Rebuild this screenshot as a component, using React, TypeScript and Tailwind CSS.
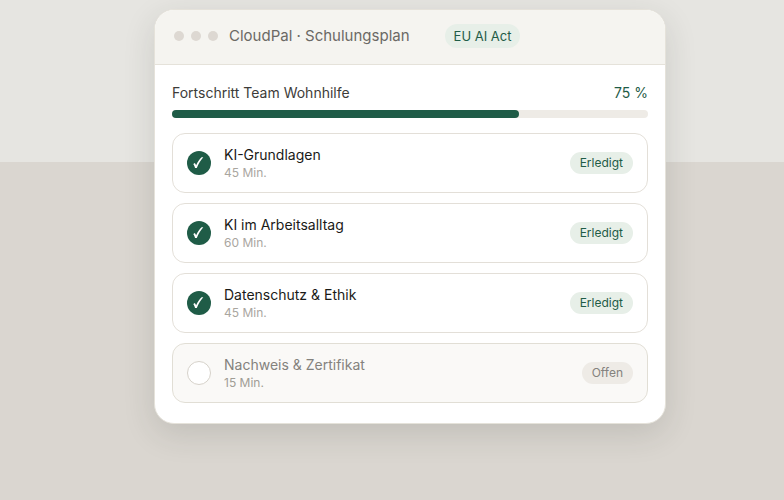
type Lesson = {
  title: string;
  duration: string;
  done: boolean;
};

const lessons: Lesson[] = [
  { title: "KI-Grundlagen", duration: "45 Min.", done: true },
  { title: "KI im Arbeitsalltag", duration: "60 Min.", done: true },
  { title: "Datenschutz & Ethik", duration: "45 Min.", done: true },
  { title: "Nachweis & Zertifikat", duration: "15 Min.", done: false },
];

function StatusIcon({ done }: { done: boolean }) {
  if (!done) {
    return <span className="size-6 shrink-0 rounded-full border border-[#d6d2ca] bg-white" />;
  }

  return (
    <span className="flex size-6 shrink-0 items-center justify-center rounded-full bg-[#1f5c47]">
      <svg viewBox="0 0 24 24" className="size-6" aria-label="Erledigt">
        <path
          d="M6.3 12.9 L7.9 12 C8.5 12.8 8.8 13.5 9.1 14.3 C10.7 10.9 12.5 8.2 14.6 6.3 L16.3 6.3 C13.5 9.4 11.5 12.7 9.8 17 L8.1 17 C7.7 15.4 7.1 14.1 6.3 12.9 Z"
          fill="#fff"
        />
      </svg>
    </span>
  );
}

function LessonRow({ title, duration, done }: Lesson) {
  return (
    <li
      className={`flex h-15 items-center rounded-[13px] border px-3.5 ${
        done ? "border-[#e3dfd8] bg-white" : "border-[#e1ded5] bg-[#faf9f7]"
      }`}
    >
      <StatusIcon done={done} />
      <div className="ml-[13px] flex-1">
        <h3 className={`text-[14px] leading-5 ${done ? "text-[#1a1a18]" : "text-[#84827d]"}`}>
          {title}
        </h3>
        <p className={`text-[12px] leading-4 ${done ? "text-[#aaa69f]" : "text-[#a09d95]"}`}>
          {duration}
        </p>
      </div>
      <span
        className={`rounded-full px-2.5 text-[12px] leading-[22px] ${
          done ? "bg-[#e7efe8] text-[#1f5c47]" : "bg-[#eeebe6] text-[#84827d]"
        }`}
      >
        {done ? "Erledigt" : "Offen"}
      </span>
    </li>
  );
}

export default function App() {
  return (
    <main className="min-h-screen bg-[linear-gradient(#e6e5e1_162px,#dad6d0_162px)] pt-[9px] pr-[118px] pb-10 pl-[154px] font-['Inter','Liberation_Sans',sans-serif]">
      <section className="overflow-hidden rounded-[20px] border border-[#e5e2da] bg-white shadow-[0_10px_32px_rgba(40,50,40,0.14)]">
        <header className="flex h-[55px] items-center border-b border-[#e5e2da] bg-[#f5f4f0] px-[19px] pb-0.5">
          <div className="flex gap-[7px]">
            <span className="size-2.5 rounded-full bg-[#ddd8d2]" />
            <span className="size-2.5 rounded-full bg-[#ddd8d2]" />
            <span className="size-2.5 rounded-full bg-[#ddd8d2]" />
          </div>
          <h1 className="ml-[11px] text-[15px] leading-6 text-[#6b6965]">CloudPal · Schulungsplan</h1>
          <span className="ml-[35px] rounded-full bg-[#e7efe8] px-[9px] text-[13px] leading-6 text-[#1f5c47]">
            EU AI Act
          </span>
        </header>

        <div className="px-[17px] pt-4 pb-5">
          <div className="flex justify-between text-[14px] leading-6">
            <h2 id="progress-label" className="text-[#3d3c39]">
              Fortschritt Team Wohnhilfe
            </h2>
            <span className="text-[#1f5c47]">75 %</span>
          </div>
          <div
            role="progressbar"
            aria-labelledby="progress-label"
            aria-valuenow={75}
            className="mt-[5px] h-2 rounded-full bg-[#eeebe6]"
          >
            <div className="h-full w-[73%] rounded-full bg-[#1f5c47]" />
          </div>

          <ul className="mt-[15px] flex flex-col gap-2.5">
            {lessons.map((lesson) => (
              <LessonRow key={lesson.title} {...lesson} />
            ))}
          </ul>
        </div>
      </section>
    </main>
  );
}
